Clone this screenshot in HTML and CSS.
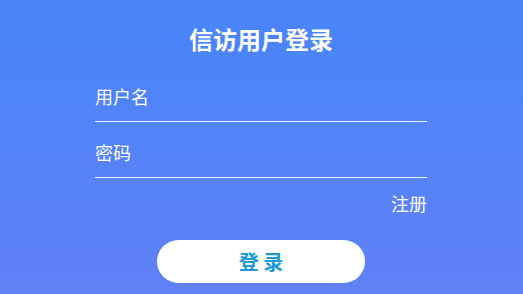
FILE: index.html
```html
<!DOCTYPE html>
<html lang="zh-CN">
<head>
<meta charset="utf-8">
<title>信访用户登录</title>
<link rel="stylesheet" href="styles.css">
</head>
<body>
<div class="page">
  <h1 class="title">信访用户登录</h1>
  <form class="form">
    <div class="field field-first"><span class="placeholder">用户名</span></div>
    <div class="field"><span class="placeholder">密码</span></div>
    <div class="links"><a class="register">注册</a></div>
    <div class="actions"><button type="button" class="login-btn">登 录</button></div>
  </form>
</div>
</body>
</html>
```
FILE: styles.css
```css
html, body {
  margin: 0;
  padding: 0;
  height: 100%;
}
body {
  background: linear-gradient(180deg, #4785fb 0%, #6180f6 100%);
  font-family: "Noto Sans CJK SC", "Noto Sans", sans-serif;
  color: #ffffff;
  overflow: hidden;
}
.page {
  width: 332px;
  margin: 0 auto;
  padding: 23px 1px 0 0;
}
.title {
  margin: 0;
  font-size: 24px;
  line-height: 32px;
  font-weight: 700;
  text-align: center;
  color: #ffffff;
}
.form {
  margin: 0;
  display: flex;
  flex-direction: column;
}
.field {
  padding: 18px 0 13px;
  border-bottom: 1px solid rgba(255, 255, 255, 0.92);
  font-size: 18px;
  line-height: 24px;
}
.field-first {
  margin-top: 11px;
}
.placeholder {
  color: #ffffff;
}
.links {
  margin-top: 13px;
  display: flex;
  justify-content: flex-end;
}
.register {
  font-size: 18px;
  line-height: 24px;
  color: #ffffff;
}
.actions {
  margin-top: 25px;
  display: flex;
  justify-content: center;
}
.login-btn {
  width: 208px;
  height: 43px;
  border: none;
  border-radius: 22px;
  background: #ffffff;
  color: #1a9ad8;
  font-family: "Noto Sans CJK SC", "Noto Sans", sans-serif;
  font-size: 20px;
  font-weight: 700;
  line-height: 24px;
  padding: 0;
}
```
